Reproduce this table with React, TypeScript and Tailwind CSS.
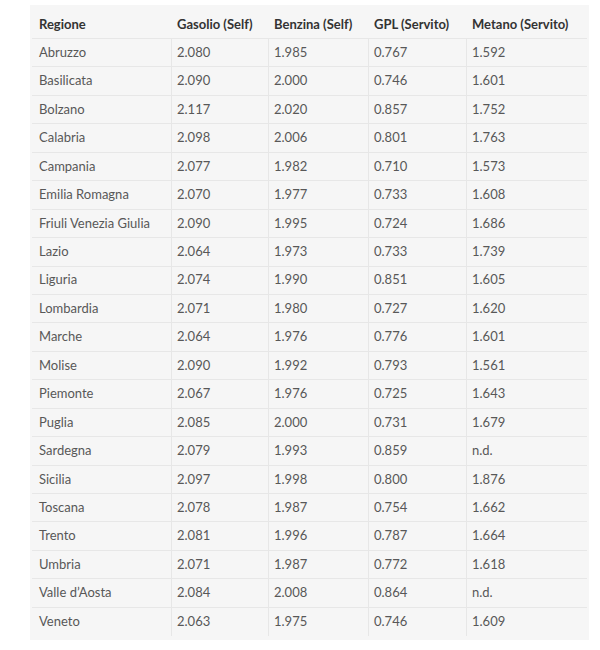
import React from "react";

const rows: [string, string, string, string, string][] = [
  ["Abruzzo", "2.080", "1.985", "0.767", "1.592"],
  ["Basilicata", "2.090", "2.000", "0.746", "1.601"],
  ["Bolzano", "2.117", "2.020", "0.857", "1.752"],
  ["Calabria", "2.098", "2.006", "0.801", "1.763"],
  ["Campania", "2.077", "1.982", "0.710", "1.573"],
  ["Emilia Romagna", "2.070", "1.977", "0.733", "1.608"],
  ["Friuli Venezia Giulia", "2.090", "1.995", "0.724", "1.686"],
  ["Lazio", "2.064", "1.973", "0.733", "1.739"],
  ["Liguria", "2.074", "1.990", "0.851", "1.605"],
  ["Lombardia", "2.071", "1.980", "0.727", "1.620"],
  ["Marche", "2.064", "1.976", "0.776", "1.601"],
  ["Molise", "2.090", "1.992", "0.793", "1.561"],
  ["Piemonte", "2.067", "1.976", "0.725", "1.643"],
  ["Puglia", "2.085", "2.000", "0.731", "1.679"],
  ["Sardegna", "2.079", "1.993", "0.859", "n.d."],
  ["Sicilia", "2.097", "1.998", "0.800", "1.876"],
  ["Toscana", "2.078", "1.987", "0.754", "1.662"],
  ["Trento", "2.081", "1.996", "0.787", "1.664"],
  ["Umbria", "2.071", "1.987", "0.772", "1.618"],
  ["Valle d’Aosta", "2.084", "2.008", "0.864", "n.d."],
  ["Veneto", "2.063", "1.975", "0.746", "1.609"],
];

const headers = ["Regione", "Gasolio (Self)", "Benzina (Self)", "GPL (Servito)", "Metano (Servito)"];
const widths = ["w-[140px]", "w-[97px]", "w-[100px]", "w-[98px]", "w-[119px]"];
const pads = ["pl-[7px]", "pl-[5px]", "pl-[5px]", "pl-[5px]", "pl-[5px]"];

export default function App() {
  return (
    <div className="min-h-[650px] w-[600px] bg-white pt-[5px] pl-[30px] font-['Lato','Liberation_Sans',sans-serif] text-[13px]">
      <div className="w-[559px] bg-[#f6f6f6] px-[2px] pb-[4px]">
        <div className="flex h-[34px] items-center border-b border-[#e7e7e7] pt-[6px] text-[#333] font-bold">
          {headers.map((h, i) => (
            <div key={h} className={`${widths[i]} ${pads[i]} shrink-0`}>
              {h}
            </div>
          ))}
        </div>
        {rows.map((r, ri) => (
          <div
            key={r[0]}
            className={`flex h-[28.45px] text-[#585858] ${ri < rows.length - 1 ? "border-b border-[#e7e7e7]" : ""}`}
          >
            {r.map((c, i) => (
              <div
                key={i}
                className={`${widths[i]} ${pads[i]} flex shrink-0 items-center ${i < 4 ? "border-r border-[#e7e7e7]" : ""}`}
              >
                {c}
              </div>
            ))}
          </div>
        ))}
      </div>
    </div>
  );
}
